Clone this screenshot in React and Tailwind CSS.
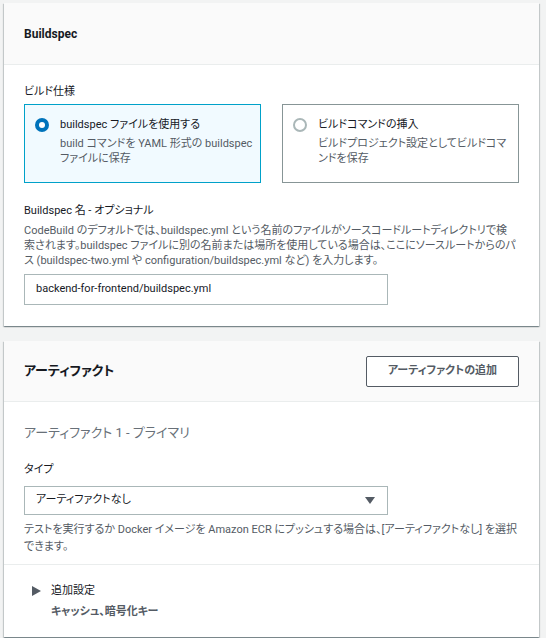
import React from 'react';

const cardShadow =
  'shadow-[0_1px_1px_0_rgba(0,28,36,0.3),1px_1px_1px_0_rgba(0,28,36,0.15),-1px_1px_1px_0_rgba(0,28,36,0.15)]';

const Radio = ({ checked }) =>
  checked ? (
    <span className="mt-[2px] flex h-[14px] w-[14px] shrink-0 items-center justify-center rounded-full bg-[#0073bb]">
      <span className="h-[6px] w-[6px] rounded-full bg-white" />
    </span>
  ) : (
    <span className="mt-[2px] h-[14px] w-[14px] shrink-0 rounded-full border-2 border-[#aab7b8] bg-white" />
  );

const Tile = ({ checked, title, desc }) => (
  <div
    className={
      checked
        ? 'flex gap-[11px] border border-[#00a1c9] bg-[#f1faff] pl-[10px] pr-2 pt-[11px] pb-[16px]'
        : 'flex gap-[11px] border border-[#879596] bg-white pl-[10px] pr-2 pt-[11px] pb-[16px]'
    }
  >
    <Radio checked={checked} />
    <div className="whitespace-nowrap">
      <div className="text-[11px] leading-[18px] text-[#16191f]">{title}</div>
      <div className="mt-[3px] text-[11px] leading-[14.5px] text-[#545b64]">{desc}</div>
    </div>
  </div>
);

export default function App() {
  return (
    <div className="min-h-screen bg-[#f2f3f3] pt-[3px] pl-[4px] pb-4 font-['Roboto','Noto_Sans_CJK_JP',sans-serif] [font-feature-settings:'palt'] text-[#16191f]">
      {/* Buildspec */}
      <section className={`w-[535px] bg-white ${cardShadow}`}>
        <div className="flex h-[62px] items-center border-b border-[#eaeded] bg-[#fafafa] px-5">
          <h2 className="text-[12px] font-bold">Buildspec</h2>
        </div>
        <div className="px-5 pt-[19px] pb-[21px]">
          <div className="text-[11px] leading-[16px]">ビルド仕様</div>
          <div className="mt-[4px] grid grid-cols-2 gap-[21px]">
            <Tile
              checked
              title="buildspec ファイルを使用する"
              desc={<>build コマンドを YAML 形式の buildspec<br />ファイルに保存</>}
            />
            <Tile
              title="ビルドコマンドの挿入"
              desc={<>ビルドプロジェクト設定としてビルドコマ<br />ンドを保存</>}
            />
          </div>

          <div className="mt-[20px] text-[11px] leading-[16px]">
            Buildspec 名 - <span className="[font-style:oblique_12deg]">オプショナル</span>
          </div>
          <p className="mt-[4px] whitespace-nowrap text-[11px] leading-[15px] text-[#545b64]">
            CodeBuild のデフォルトでは、buildspec.yml という名前のファイルがソースコードルートディレクトリで検
            <br />
            索されます。buildspec ファイルに別の名前または場所を使用している場合は、ここにソースルートからのパ
            <br />
            ス (buildspec-two.yml や configuration/buildspec.yml など) を入力します。
          </p>
          <div className="mt-[6px] flex h-[31px] w-[364px] items-center border border-[#aab7b8] px-[11px] text-[11px]">
            backend-for-frontend/buildspec.yml
          </div>
        </div>
      </section>

      {/* Artifacts */}
      <section className={`mt-[15px] w-[535px] bg-white ${cardShadow}`}>
        <div className="flex h-[61px] items-center justify-between border-b border-[#eaeded] bg-[#fafafa] px-5">
          <h2 className="text-[13px] font-bold">アーティファクト</h2>
          <button className="flex h-[31px] w-[153px] items-center justify-center rounded-[2px] border border-[#545b64] bg-white text-[11px] font-bold text-[#545b64]">
            アーティファクトの追加
          </button>
        </div>
        <div className="px-5 pt-[22px] pb-[9px]">
          <div className="text-[13px] leading-[18px] text-[#687078]">アーティファクト 1 - プライマリ</div>
          <div className="mt-[20px] text-[11px] leading-[16px]">タイプ</div>
          <div className="mt-[8px] flex h-[29px] w-[364px] items-center justify-between border border-[#aab7b8] pl-[11px] pr-[12px] text-[11px]">
            <span>アーティファクトなし</span>
            <svg width="10" height="7" viewBox="0 0 10 7">
              <path d="M0 0 H10 L5 7 Z" fill="#545b64" />
            </svg>
          </div>
          <p className="mt-[6px] whitespace-nowrap text-[11px] leading-[17px] text-[#545b64]">
            テストを実行するか Docker イメージを Amazon ECR にプッシュする場合は、[アーティファクトなし] を選択
            <br />
            できます。
          </p>
        </div>
        <div className="border-t border-[#eaeded] px-5 pt-[18px] pb-[17px]">
          <div className="flex items-center leading-[16px]">
            <svg className="ml-[8px]" width="9" height="10" viewBox="0 0 9 10">
              <path d="M0 0 L9 5 L0 10 Z" fill="#545b64" />
            </svg>
            <span className="ml-[10px] text-[11px]">追加設定</span>
          </div>
          <div className="mt-[5px] pl-[27px] text-[11px] font-bold leading-[16px] text-[#545b64]">
            キャッシュ、暗号化キー
          </div>
        </div>
      </section>
    </div>
  );
}
